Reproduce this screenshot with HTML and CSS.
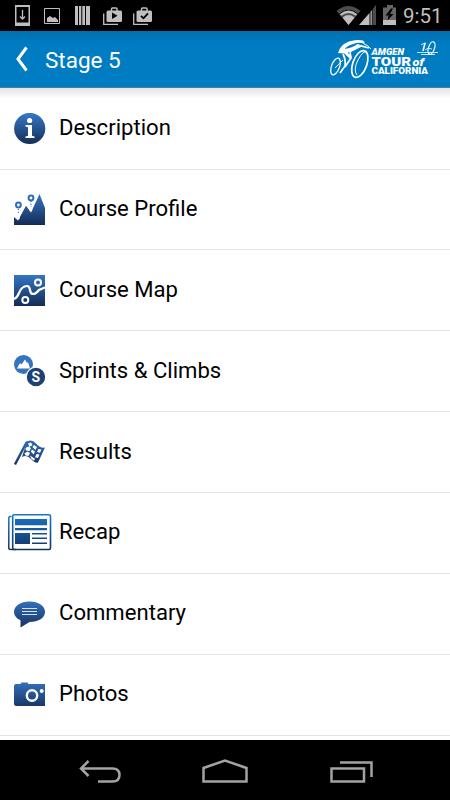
FILE: index.html
```html
<!DOCTYPE html>
<html lang="en">
<head>
<meta charset="UTF-8">
<title>Stage 5</title>
<meta name="viewport" content="width=device-width, initial-scale=1">
<link rel="stylesheet" href="styles.css">
</head>
<body>

<!-- status bar -->
<div class="status">
  <svg class="notifications" width="160" height="31" viewBox="0 0 160 31">
    <path fill="#bfbfbf" fill-rule="evenodd" d="M15 5h15v21H15zM16.500 7v15.500h12V7z"/>
    <path fill="none" stroke="#bfbfbf" stroke-width="1.300" d="M22.500 10v9M20 16.500l2.500 2.500 2.500-2.500"/>
    <path fill="none" stroke="#bfbfbf" d="M44.500 8.500h15v15h-15z"/>
    <path fill="#bfbfbf" d="M47 22v-4l3-2 3 2 2-1 3 3v2z"/>
    <path fill="#bfbfbf" d="M75 6h3v19h-3zM79 6h2.300v19h-2.300zM82.300 6h2.700v19h-2.700zM86 6h4v19h-4z"/>
    <g id="bag">
      <path fill="none" stroke="#bfbfbf" stroke-width="1.300" d="M103.700 13.500v10.800H118"/>
      <path fill="none" stroke="#bfbfbf" stroke-width="1.500" d="M111.500 11V9q0-1 1-1h3.500q1 0 1 1v2"/>
      <rect fill="#bfbfbf" x="106.500" y="10.500" width="15.500" height="11.500" rx="1.500"/>
    </g>
    <path fill="#000" d="M112 12.500l5.500 3.300-5.500 3.300z"/>
    <use href="#bag" x="30"/>
    <path fill="none" stroke="#000" stroke-width="1.800" d="M141 15.800l2.500 2.500 4.500-5"/>
  </svg>
  <div class="system">
    <svg width="66" height="31" viewBox="334 0 66 31">
      <path fill="#4c4c4c" d="M336.500 11q11.800-10 24 0l-12 14z"/>
      <path fill="none" stroke="#000" stroke-width="1" d="M338.500 14.500q10-8.500 20 0M342 18.300q6.500-5 13 0"/>
      <path fill="#bfbfbf" d="M342.500 17.500q6-4.800 12.200 0l-6.200 7.500z"/>
      <path fill="none" stroke="#bfbfbf" stroke-width="2.200" d="M340.500 15q8-6.500 16 0"/>
      <path fill="#bfbfbf" d="M359 25l10.500-12v12z"/>
      <path fill="#8f8f8f" d="M370.300 12l2-2.500V25h-2z"/>
      <path fill="#4c4c4c" d="M373 8.500l3-3.500v20h-3z"/>
      <path fill="#666" d="M383 7.500h4V5h6v2.500h3V20h-13z"/>
      <path fill="#bfbfbf" d="M383 20h13v5h-13z"/>
      <path fill="#000" d="M391 8.500l-5.500 7h3l-1 5 6-6.500h-3.500l3-5.500z"/>
    </svg>
    <span class="clock">9:51</span>
  </div>
</div>

<header>
  <svg class="back" width="14" height="26" viewBox="0 0 14 26"><path fill="none" stroke="#fff" stroke-width="3" d="M11.500 1.500L3 13l8.500 11.500"/></svg>
  <h1>Stage 5</h1>
  <svg class="logo" width="112" height="46" viewBox="328 36 112 46">
    <g fill="none" stroke="#fff">
      <ellipse cx="335.500" cy="66.500" rx="4" ry="8.800" transform="rotate(20 335.500 66.500)" stroke-width="1.300"/>
      <ellipse cx="359.800" cy="64" rx="7" ry="14" transform="rotate(20 359.800 64)" stroke-width="1.700"/>
      <path stroke-width="1" d="M357 75q-4-5 1-15t9-8"/>
      <path stroke-width="1.700" d="M340 52.500l11-1.500 10-5 8 2M350 52l1 6-6 9M343 54q3 6 2 12l-5 7"/>
      <path stroke-width="1" d="M335 68l8-8M364 44q4 1 7 5"/>
    </g>
    <path fill="#fff" d="M338 53q2-8 11-11.500 7-2.500 14-1 2 1 1.500 3.500-4-2-8-1-9 2-12 6 8-1 13-5l3 1q-5 6-13 7.500l4 4-2 2-5-5z"/>
    <g class="logo-text">
      <text x="371.500" y="55.200" font-size="9.800" font-style="italic" textLength="32.500" lengthAdjust="spacingAndGlyphs">AMGEN</text>
      <text x="371.500" y="66" font-size="12.500" textLength="39.500" lengthAdjust="spacingAndGlyphs">TOUR</text>
      <text x="412.500" y="66" font-size="11.500" font-style="italic" textLength="11.500" lengthAdjust="spacingAndGlyphs">of</text>
      <text x="371.500" y="74" font-size="8.400" textLength="56.500" lengthAdjust="spacingAndGlyphs">CALIFORNIA</text>
    </g>
    <g fill="none" stroke="#fff">
      <path stroke-width="1.600" d="M425 43l-2 8"/>
      <ellipse cx="431.500" cy="48" rx="3" ry="6.500" transform="rotate(18 431.500 48)" stroke-width="1.200"/>
      <path stroke-width=".8" d="M421 44.500l5-1.500M417 52.500h21M421 54.500h14M425 50q3-3 7-1"/>
    </g>
  </svg>
</header>

<main>
  <svg class="defs" width="0" height="0">
    <linearGradient id="blue" x1="0" y1="0" x2="0" y2="32" gradientUnits="userSpaceOnUse">
      <stop offset="0" stop-color="#3678c8"/>
      <stop offset="1" stop-color="#142c55"/>
    </linearGradient>
    <linearGradient id="news" x1="0" y1="0" x2="0" y2="37" gradientUnits="userSpaceOnUse">
      <stop offset="0" stop-color="#1877cb"/>
      <stop offset="1" stop-color="#16305f"/>
    </linearGradient>
  </svg>
  <ul>
    <li>
      <svg width="32" height="32" viewBox="0 0 32 32">
        <circle cx="15.700" cy="15.500" r="15.600" fill="url(#blue)"/>
        <circle cx="15.600" cy="7.500" r="2.600" fill="#fff"/>
        <path fill="#fff" d="M11.500 12H18v10.800l2.500.7V25h-9v-1.500l2.500-.7v-8.600l-2.500-.7z"/>
      </svg>
      <span>Description</span>
    </li>
    <li>
      <svg width="32" height="32" viewBox="0 0 32 32">
        <path fill="url(#blue)" d="M0 32v-8l4 3.500 8-14.800 5 6.800L25.500 1 31 15v17z"/>
        <path fill="none" stroke="#fff" stroke-width="2.400" stroke-dasharray="1.600 1.100" d="M4.500 16v11M17 8v11"/>
        <path fill="none" stroke="#4f86c6" stroke-width="1.300" stroke-dasharray="1.300 1.400" d="M4.500 16v5M17 8v6"/>
        <circle cx="4.400" cy="12" r="2.400" fill="#fff" stroke="#2f6eb5" stroke-width="2"/>
        <circle cx="17" cy="5" r="2.400" fill="#fff" stroke="#2f6eb5" stroke-width="2"/>
      </svg>
      <span>Course Profile</span>
    </li>
    <li>
      <svg width="32" height="32" viewBox="0 0 32 32">
        <path fill="url(#blue)" d="M0 1h31v31H0z"/>
        <g fill="none" stroke="#fff">
          <path stroke-width="2.200" d="M0 25q3-1 5-6c2-5 4-7 8-7 5 0 1 8 6 8q3 0 6-4l6-2.500"/>
          <circle cx="24" cy="8.500" r="3" stroke-width="2"/>
          <circle cx="11.300" cy="26" r="3" stroke-width="2"/>
        </g>
      </svg>
      <span>Course Map</span>
    </li>
    <li>
      <svg width="32" height="32" viewBox="0 0 32 32">
        <circle cx="9.500" cy="9.500" r="9.500" fill="#3674bd"/>
        <path fill="#fff" d="M3 13.500L6 8l1.500 1.500L11 4.500l2 3.500 1-.7 2 6.200z"/>
        <circle cx="22" cy="22" r="9.800" fill="#1d4077" stroke="#fff" stroke-width="1.200"/>
        <text class="s" x="21.900" y="27">S</text>
      </svg>
      <span>Sprints &amp; Climbs</span>
    </li>
    <li>
      <svg width="32" height="32" viewBox="0 0 32 32">
        <path fill="none" stroke="url(#blue)" stroke-width="2.400" d="M1 28.500L13 5.500"/>
        <path fill="url(#blue)" d="M13 5.500q5-3 9 2t9 4L24 26.500q-3 1-7-3.500t-9-2z"/>
        <path fill="#fff" d="M14 7.500l3-1 1.500 2.500-3 2zM20 9l3 2-1.500 3-3-3zM24.500 13l3 .5-1.500 3.300-3-.8zM11.500 12l2.800-1.500 2.700 1.500-1.500 3-3.500-.5zM18 13.500l3 2-1.300 3-3-3zM22.500 18l3 .5-1.500 3.500-3-.8zM10.500 17.500l3-2 2.500 1.500-1.500 3-3-.5zM16 19.500l3 2 2 1.300-1 2-3-2.500z"/>
      </svg>
      <span>Results</span>
    </li>
    <li>
      <svg width="44" height="37" viewBox="0 0 44 37">
        <rect x="4.700" y=".8" width="37.800" height="34.700" rx="1.500" fill="none" stroke="url(#news)" stroke-width="1.600"/>
        <path fill="none" stroke="url(#news)" stroke-width="1.500" d="M3.500 2.500H2Q.8 2.500.8 4v30q0 1.500 2 1.500h5"/>
        <path fill="url(#news)" d="M7 5h32v6.300H7zM7 14h32v2.200H7zM7 19h15v11H7zM24 19h15v1.600H24zM24 23.500h15v1.600H24zM24 28.500h15v1.600H24z"/>
      </svg>
      <span>Recap</span>
    </li>
    <li>
      <svg width="32" height="32" viewBox="0 0 32 32">
        <path fill="url(#blue)" d="M15.500 3.500C24.500 3.500 31 8 31 13.800c0 6-6.500 10.300-15.500 10.300L6.500 29.500V22.300C2.500 20.500 0 17.500 0 13.800 0 8 6.500 3.500 15.500 3.500z"/>
        <path stroke="#d5e1f0" d="M8 10.500h15M8 13.500h15M8 16.500h15"/>
      </svg>
      <span>Commentary</span>
    </li>
    <li>
      <svg width="32" height="32" viewBox="0 0 32 32">
        <path fill="url(#blue)" d="M2 5h4.500l1-1.500h6L14.500 5H31v22H2.500Q0 27 0 24.500V7q0-2 2-2z"/>
        <circle cx="18" cy="16.500" r="5.200" fill="none" stroke="#fff" stroke-width="2.400"/>
        <circle cx="27.700" cy="12" r="2" fill="#fff"/>
      </svg>
      <span>Photos</span>
    </li>
  </ul>
</main>

<nav>
  <svg width="450" height="60" viewBox="0 740 450 60">
    <g fill="none" stroke="#a3a3a3" stroke-width="2.500">
      <path d="M98 781.500h14.500q7 0 7-6.500t-7-6.500H81M88.500 761l-7.500 7.500 7.500 7.500"/>
      <path d="M203.500 781.500V768l21.500-7.500 21.500 7.500v13.500z"/>
      <path d="M331.500 768.500h32.500v13h-32.500zM340 762.500h31.500V777"/>
    </g>
  </svg>
</nav>

</body>
</html>
```

FILE: styles.css
```css
body { font-family: Roboto, "Liberation Sans", sans-serif; background: #fff; color: #000; margin: 0; height: 800px; display: flex; flex-direction: column; overflow: hidden; }
svg { display: block; flex: none; }

.status { background: #000; height: 31px; flex: none; display: flex; justify-content: space-between; }
.system { display: flex; }
.clock { width: 47px; padding-left: 3px; color: #bfbfbf; font-size: 20.5px; line-height: 33px; }

header { background: linear-gradient(#006fae, #007cc3 14px); height: 57px; flex: none; display: flex; align-items: center; color: #fff; box-sizing: border-box; border-bottom: 1px solid #4c7c9e; }
.back { margin-left: 15px; }
h1 { font-size: 22.5px; font-weight: 400; line-height: 30px; margin: 1px 0 0 16px; flex: 1; }
.logo { margin-right: 10px; }
.logo-text { fill: #fff; font-weight: 900; }

main { flex: 1; min-height: 0; overflow: hidden; background: linear-gradient(#e2e2e2, #fff 11px); }
.defs { position: absolute; }
ul { list-style: none; margin: 0; padding: 0.7px 0 0; }
li { height: 80.86px; box-sizing: border-box; border-bottom: 1px solid #e3e3e3; display: grid; grid-template-columns: 59px 1fr; align-items: center; font-size: 22.1px; }
li svg { justify-self: center; }
li span { line-height: 30px; padding-bottom: 3px; }
.s { fill: #fff; font-size: 14px; font-weight: 700; text-anchor: middle; }

nav { background: #000; height: 60px; flex: none; }
```
